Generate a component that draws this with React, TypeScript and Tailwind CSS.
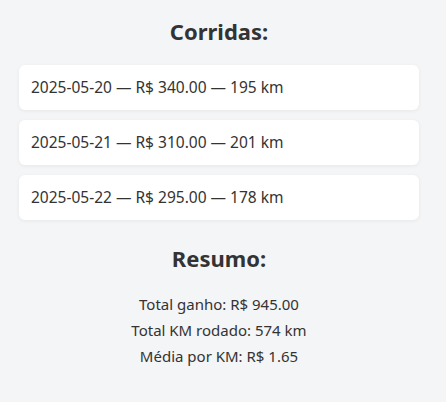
import React from "react";

const corridas = [
  { data: "2025-05-20", valor: "340.00", km: 195 },
  { data: "2025-05-21", valor: "310.00", km: 201 },
  { data: "2025-05-22", valor: "295.00", km: 178 },
];

export default function App() {
  return (
    <div
      className="min-h-[402px] bg-[#f4f5f7] text-[#333333]"
      style={{ fontFamily: '"Noto Sans", "Open Sans", sans-serif' }}
    >
      <div className="w-[400px] ml-[19px] pt-[14px]">
        <h2 className="text-center text-[22px] font-bold leading-[34px]">Corridas:</h2>
        <div className="mt-[17px] flex flex-col gap-[10px]">
          {corridas.map((c) => (
            <div
              key={c.data}
              className="h-[45px] bg-white rounded-[6px] shadow-[0_1px_4px_rgba(0,0,0,0.06)] px-[12px] flex items-center text-[15.5px]"
            >
              {c.data} — R$ {c.valor} — {c.km} km
            </div>
          ))}
        </div>
        <h2 className="mt-[21px] text-center text-[22px] font-bold leading-[34px]">Resumo:</h2>
        <div className="mt-[16px] text-center text-[15px] leading-[26px]">
          <p>Total ganho: R$ 945.00</p>
          <p>Total KM rodado: 574 km</p>
          <p>Média por KM: R$ 1.65</p>
        </div>
      </div>
    </div>
  );
}
